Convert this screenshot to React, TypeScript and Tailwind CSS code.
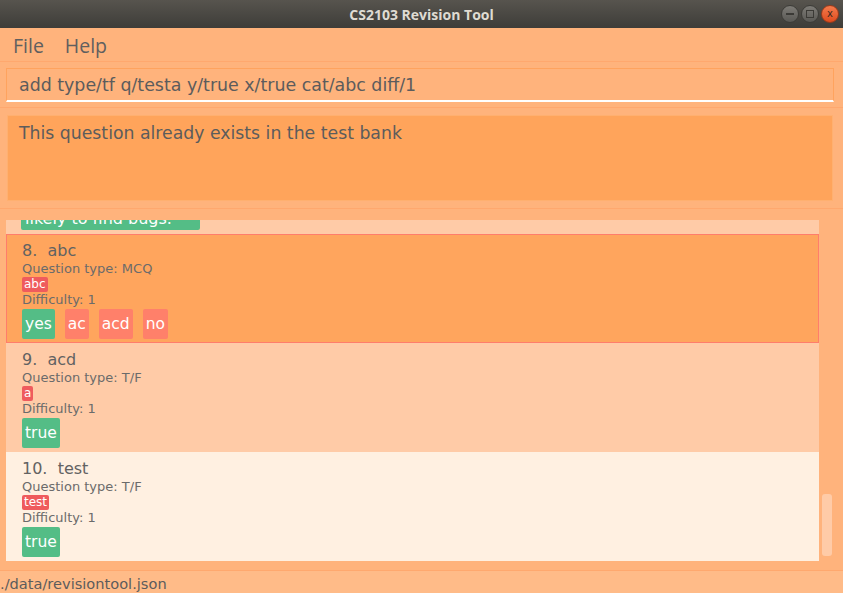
import React from 'react'

type Item = {
  num: number
  title: string
  qtype: string
  tag: string
  diff: number
  answers: { text: string; correct: boolean }[]
  bg: string
  selected?: boolean
}

const items: Item[] = [
  {
    num: 8, title: 'abc', qtype: 'MCQ', tag: 'abc', diff: 1,
    answers: [
      { text: 'yes', correct: true },
      { text: 'ac', correct: false },
      { text: 'acd', correct: false },
      { text: 'no', correct: false },
    ],
    bg: 'bg-[#ffa55d]', selected: true,
  },
  {
    num: 9, title: 'acd', qtype: 'T/F', tag: 'a', diff: 1,
    answers: [{ text: 'true', correct: true }],
    bg: 'bg-[#ffcba7]',
  },
  {
    num: 10, title: 'test', qtype: 'T/F', tag: 'test', diff: 1,
    answers: [{ text: 'true', correct: true }],
    bg: 'bg-[#fff0e1]',
  },
]

function QuestionCard({ item }: { item: Item }) {
  return (
    <div
      className={`h-[109px] ${item.bg} pl-[15px] pt-[6px] ${item.selected ? 'border border-[#ff7d6b]' : 'border border-transparent'}`}
    >
      <div className="text-[16px] leading-[19px] text-[#626262]">
        {item.num}.&nbsp;&nbsp;{item.title}
      </div>
      <div className="text-[13px] leading-[16px] mt-[1px] text-[#6b6b6b]">Question type: {item.qtype}</div>
      <div className="flex">
        <span className="bg-[#ef5b5d] text-white text-[12px] leading-[15px] px-[2px] rounded-[2px]">{item.tag}</span>
      </div>
      <div className="text-[13px] leading-[16px] text-[#6b6b6b]">Difficulty: {item.diff}</div>
      <div className="flex gap-[10px] mt-[1px]">
        {item.answers.map((a, i) => (
          <span
            key={i}
            className={`${a.correct ? 'bg-[#54bd86]' : 'bg-[#ff806a]'} text-white text-[15.5px] leading-[30px] px-[3px] rounded-[2px]`}
          >
            {a.text}
          </span>
        ))}
      </div>
    </div>
  )
}

export default function App() {
  return (
    <div
      className="w-[843px] h-[593px] flex flex-col bg-[#ffb37c] overflow-hidden"
      style={{ fontFamily: '"DejaVu Sans", "Open Sans", sans-serif' }}
    >
      {/* title bar */}
      <div className="h-[28px] shrink-0 bg-gradient-to-b from-[#57544e] to-[#3e3d39] relative flex items-center justify-center">
        <span className="text-[#dfdbd2] text-[14px] font-bold" style={{ fontFamily: '"Open Sans", sans-serif' }}>
          CS2103 Revision Tool
        </span>
        <div className="absolute right-[4px] top-[5px] flex gap-[2px]">
          <span className="w-[18px] h-[18px] rounded-full bg-gradient-to-b from-[#7d7b76] to-[#5a5955] border border-[#3d3c38] flex items-center justify-center">
            <span className="w-[8px] h-[2px] bg-[#3b3a36]" />
          </span>
          <span className="w-[18px] h-[18px] rounded-full bg-gradient-to-b from-[#7d7b76] to-[#5a5955] border border-[#3d3c38] flex items-center justify-center">
            <span className="w-[8px] h-[8px] border-[1.5px] border-[#3b3a36]" />
          </span>
          <span className="w-[18px] h-[18px] rounded-full bg-gradient-to-b from-[#f47a4b] to-[#df4b1c] border border-[#9c3a1a] flex items-center justify-center text-[#3b2a20] text-[10px] leading-none">
            x
          </span>
        </div>
      </div>

      {/* menu */}
      <div className="h-[34px] shrink-0 flex items-center gap-[21px] pl-[13px] pt-[2px] text-[19.5px] text-[#5f5f5f] border-b border-[#ffa86e]" style={{ fontFamily: '"Open Sans", sans-serif' }}>
        <span>File</span>
        <span>Help</span>
      </div>

      {/* command box */}
      <div className="pl-[6px] pr-[9px] pt-[6px] pb-[5px] border-b border-[#ffa86e]">
        <div className="h-[34px] border border-[#ffa35e] border-b-2 border-b-white pl-[12px] pt-[6px] text-[17.4px] leading-[20px] text-[#5c5c5c]">
          add type/tf q/testa y/true x/true cat/abc diff/1
        </div>
      </div>

      {/* result display */}
      <div className="pl-[7px] pr-[10px] pt-[7px] pb-[7px] border-b border-[#ffa86e]">
        <div className="h-[86px] bg-[#ffa45b] border border-[#ffb070] pl-[11px] pt-[5px] text-[17.3px] text-[#5c5c5c]">
          This question already exists in the test bank
        </div>
      </div>

      {/* list */}
      <div className="flex-1 flex pt-[11px] pl-[6px] pr-[3px] pb-[9px] border-b border-[#ffa86e] min-h-0">
        <div className="w-[813px] flex flex-col overflow-hidden">
          <div className="h-[14px] shrink-0 bg-[#ffcba7] pl-[15px] overflow-hidden relative">
            <span className="absolute left-[15px] bottom-[4px] bg-[#54bd86] text-white text-[16px] leading-[22px] px-[4px] w-[179px] rounded-[2px]">
              likely to find bugs.
            </span>
          </div>
          {items.map((it) => (
            <QuestionCard key={it.num} item={it} />
          ))}
        </div>
        <div className="flex-1 relative">
          <span className="absolute left-[3px] top-[274px] w-[10px] h-[62px] rounded-[3px] bg-[#ffcba7]" />
        </div>
      </div>

      {/* status bar */}
      <div className="h-[22px] shrink-0 bg-[#ffbb88] pt-[4px] text-[14.6px] leading-[18px] text-[#5c5c5c]">
        ./data/revisiontool.json
      </div>
    </div>
  )
}
